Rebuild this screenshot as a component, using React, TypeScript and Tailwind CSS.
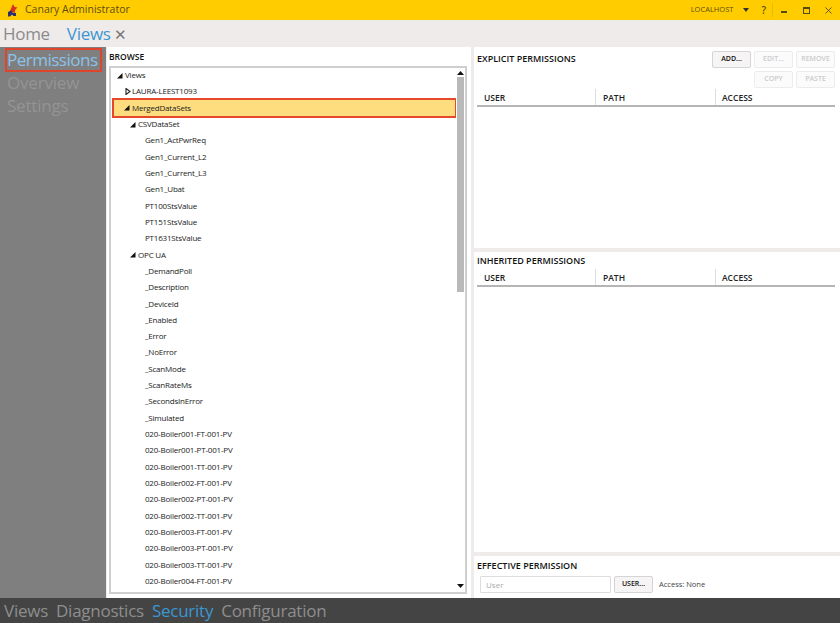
import React from 'react';

const rows: { label: string; depth: number; arrow?: 'open' | 'closed'; selected?: boolean }[] = [
  { label: 'Views', depth: 0, arrow: 'open' },
  { label: 'LAURA-LEEST1093', depth: 1, arrow: 'closed' },
  { label: 'MergedDataSets', depth: 1, arrow: 'open', selected: true },
  { label: 'CSVDataSet', depth: 2, arrow: 'open' },
  { label: 'Gen1_ActPwrReq', depth: 3 },
  { label: 'Gen1_Current_L2', depth: 3 },
  { label: 'Gen1_Current_L3', depth: 3 },
  { label: 'Gen1_Ubat', depth: 3 },
  { label: 'PT100StsValue', depth: 3 },
  { label: 'PT151StsValue', depth: 3 },
  { label: 'PT1631StsValue', depth: 3 },
  { label: 'OPC UA', depth: 2, arrow: 'open' },
  { label: '_DemandPoll', depth: 3 },
  { label: '_Description', depth: 3 },
  { label: '_DeviceId', depth: 3 },
  { label: '_Enabled', depth: 3 },
  { label: '_Error', depth: 3 },
  { label: '_NoError', depth: 3 },
  { label: '_ScanMode', depth: 3 },
  { label: '_ScanRateMs', depth: 3 },
  { label: '_SecondsInError', depth: 3 },
  { label: '_Simulated', depth: 3 },
  { label: '020-Boiler001-FT-001-PV', depth: 3 },
  { label: '020-Boiler001-PT-001-PV', depth: 3 },
  { label: '020-Boiler001-TT-001-PV', depth: 3 },
  { label: '020-Boiler002-FT-001-PV', depth: 3 },
  { label: '020-Boiler002-PT-001-PV', depth: 3 },
  { label: '020-Boiler002-TT-001-PV', depth: 3 },
  { label: '020-Boiler003-FT-001-PV', depth: 3 },
  { label: '020-Boiler003-PT-001-PV', depth: 3 },
  { label: '020-Boiler003-TT-001-PV', depth: 3 },
  { label: '020-Boiler004-FT-001-PV', depth: 3 },
];

const depthPad = ['pl-[3px]', 'pl-[11px]', 'pl-[16px]', 'pl-[31px]'];

function Arrow({ kind }: { kind?: 'open' | 'closed' }) {
  if (!kind) return null;
  return (
    <svg width="6" height="7" viewBox="0 0 6 7" className={`shrink-0 ${kind === 'open' ? 'mr-[2px]' : 'mr-[1px]'}`}>
      {kind === 'open' ? <path d="M0 6.5 L5.5 6.5 L5.5 1 Z" fill="#111" /> : <path d="M1 0.5 L5 3.5 L1 6.5 Z" fill="none" stroke="#222" strokeWidth="1.1" />}
    </svg>
  );
}

function TreeRow({ row }: { row: (typeof rows)[number] }) {
  const pad = row.selected ? 'pl-[10px]' : depthPad[row.depth];
  return (
    <div className={`flex h-[16.32px] items-center text-[8px] tracking-[-0.2px] text-[#222] ${pad} ${row.selected ? 'bg-[#fedd7f] outline-2 outline-[#e5482a] relative' : ''}`}>
      <Arrow kind={row.arrow} />
      <span>{row.label}</span>
    </div>
  );
}

function Header({ className = '' }: { className?: string }) {
  return (
    <div className={`flex h-[18px] border-b-2 border-[#b5b5b5] text-[8.5px] font-semibold text-[#222] ${className}`}>
      <div className="flex w-[119px] items-center border-r border-[#ddd] pl-[7px] pt-[2px]">USER</div>
      <div className="flex w-[120px] items-center border-r border-[#ddd] pl-[7px] pt-[2px]">PATH</div>
      <div className="flex flex-1 items-center pl-[6px] pt-[2px]">ACCESS</div>
    </div>
  );
}

function Btn({ children, on, className = '' }: { children: React.ReactNode; on?: boolean; className?: string }) {
  return (
    <button className={`flex h-[17px] w-[39px] items-center justify-center rounded-[2px] border text-[7px] font-semibold ${on ? 'border-[#d4d4d4] bg-[#f6f4f4] text-[#111]' : 'border-[#ececec] bg-[#fbfbfb] text-[#cbcbcb]'} ${className}`}>
      {children}
    </button>
  );
}

export default function App() {
  return (
    <div className="flex h-[623px] w-[840px] flex-col overflow-hidden bg-[#efebeb] font-['Open_Sans','Noto_Sans',sans-serif]">
      <div className="flex h-[20px] shrink-0 items-center bg-[#ffcc00] pl-[7px] text-[#5c4d10]">
        <svg width="11" height="13" viewBox="0 0 11 13" className="mr-[7px]">
          <path d="M6 0 L7.5 3 L10.5 3.5 L8 6 L8 9 L5.5 8 L3 10 L3 7 Z" fill="#d8301e" />
          <path d="M1 8 L4 6.5 L6 9 L9 9 L9 12 L6.5 12 L5 10.5 L3 12.5 L1 12.5 Z" fill="#2a2f6d" />
        </svg>
        <span className="text-[10.5px]">Canary Administrator</span>
        <span className="ml-auto text-[7.5px]">LOCALHOST</span>
        <svg width="6" height="4" viewBox="0 0 6 4" className="ml-[10px]"><path d="M0 0 H6 L3 4 Z" fill="#333" /></svg>
        <span className="ml-[12px] text-[10px] font-semibold">?</span>
        <div className="ml-[6px] h-[14px] w-px bg-[#eab900]" />
        <div className="ml-[8px] mt-[4px] h-[2px] w-[6px] bg-[#554a10]" />
        <div className="ml-[16px] h-[7px] w-[7px] border border-t-2 border-[#554a10]" />
        <svg width="7" height="7" viewBox="0 0 7 7" className="ml-[15px] mr-[8px]"><path d="M0.5 0.5 L6.5 6.5 M6.5 0.5 L0.5 6.5" stroke="#554a10" strokeWidth="0.9" /></svg>
      </div>

      <div className="flex h-[27px] shrink-0 items-center pl-[3px] pt-[1px] text-[17px] tracking-[-0.3px]">
        <span className="text-[#8b8b8b]">Home</span>
        <span className="ml-[17px] text-[#3b97d3]">Views</span>
        <span className="ml-[3px] text-[15px] leading-none text-[#777]">✕</span>
      </div>

      <div className="flex min-h-0 flex-1">
        <div className="flex w-[106px] shrink-0 flex-col items-start bg-[#7f7f7f] pl-[7px] text-[17px] leading-[23px] tracking-[-0.2px] text-[#949494]">
          <div className="mt-[3px] flex h-[20px] w-[93px] items-center pb-[2px] tracking-[-0.5px] text-[#8cc3ea] outline-2 outline-[#e0442a]">Permissions</div>
          <div className="mt-[0.5px]">Overview</div>
          <div>Settings</div>
        </div>

        <div className="ml-[1px] flex w-[364px] shrink-0 flex-col bg-white pl-[2px] pr-[4px]">
          <div className="flex h-[19px] shrink-0 items-center pt-[1px] text-[8.5px] font-semibold text-[#111]">BROWSE</div>
          <div className="mb-[4px] flex min-h-0 flex-1 border-2 border-[#cfcfcf]">
            <div className="-mt-[1px] min-w-0 flex-1 overflow-hidden pl-[3px] pr-[1px]">
              {rows.map((r) => (
                <TreeRow key={r.label} row={r} />
              ))}
            </div>
            <div className="flex w-[9px] shrink-0 flex-col items-center">
              <svg width="7" height="4" viewBox="0 0 7 4" className="mt-[3px] shrink-0"><path d="M0 4 H7 L3.5 0 Z" fill="#111" /></svg>
              <div className="mt-[2px] h-[215px] w-[7px] bg-[#b9b9b9]" />
              <svg width="7" height="4" viewBox="0 0 7 4" className="mb-[4px] mt-auto shrink-0"><path d="M0 0 H7 L3.5 4 Z" fill="#111" /></svg>
            </div>
          </div>
        </div>

        <div className="ml-[3px] flex min-w-0 flex-1 flex-col gap-[4px]">
          <div className="flex h-[201px] flex-col bg-white pl-[3px]">
            <div className="flex">
              <div className="pt-[5px] text-[9px] font-semibold text-[#111]">EXPLICIT PERMISSIONS</div>
              <div className="ml-auto mr-[5px] mt-[4px] flex w-[123px] flex-wrap justify-end gap-[3px]">
                <Btn on>ADD...</Btn>
                <Btn>EDIT...</Btn>
                <Btn>REMOVE</Btn>
                <Btn>COPY</Btn>
                <Btn>PASTE</Btn>
              </div>
            </div>
            <Header className="mr-[5px] mt-[1px]" />
          </div>
          <div className="flex h-[300px] flex-col bg-white pl-[3px]">
            <div className="flex h-[17px] items-center text-[9px] font-semibold text-[#111]">INHERITED PERMISSIONS</div>
            <Header className="mr-[5px]" />
          </div>
          <div className="flex h-[42px] flex-col bg-white pl-[3px]">
            <div className="flex h-[19px] items-center text-[9px] font-semibold text-[#111]">EFFECTIVE PERMISSION</div>
            <div className="mt-[1px] flex items-center pl-[3px]">
              <div className="flex h-[17px] w-[131px] items-center rounded-[1px] border border-[#ddd] pl-[5px] text-[8px] text-[#aaa]">User</div>
              <Btn on className="ml-[3px]">USER...</Btn>
              <span className="ml-[6px] text-[7.5px] text-[#444]">Access: None</span>
            </div>
          </div>
        </div>
      </div>

      <div className="flex h-[25px] shrink-0 items-center gap-[8px] bg-[#444444] pl-[4px] text-[17px] tracking-[-0.25px] text-[#8e8e8e]">
        <span>Views</span>
        <span>Diagnostics</span>
        <span className="text-[#3b97d3]">Security</span>
        <span>Configuration</span>
      </div>
    </div>
  );
}
